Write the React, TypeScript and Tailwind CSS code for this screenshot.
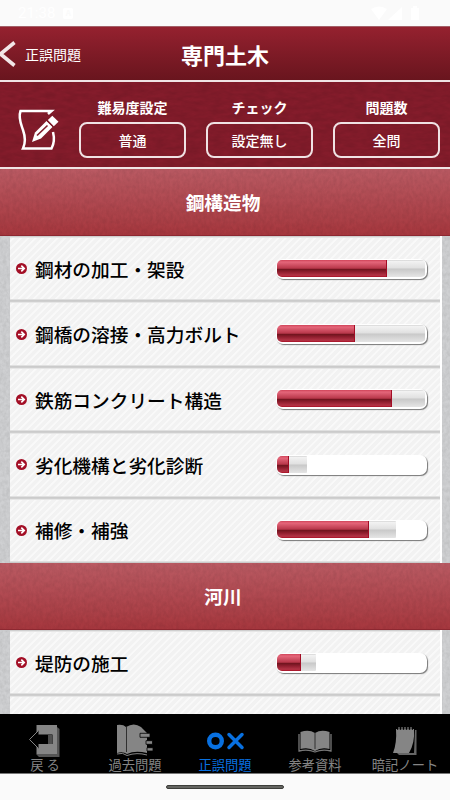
import type { ReactNode } from 'react'
import clsx from 'clsx'

interface Topic {
    title: string
    correct: number
    answered: number
}

interface Section {
    title: string
    topics: Topic[]
}

// correct / answered are percentages of the whole bar
const sections: Section[] = [
    {
        title: '鋼構造物',
        topics: [
            { title: '鋼材の加工・架設', correct: 73.8, answered: 99.4 },
            { title: '鋼橋の溶接・高力ボルト', correct: 52.4, answered: 99.4 },
            { title: '鉄筋コンクリート構造', correct: 77.2, answered: 99.4 },
            { title: '劣化機構と劣化診断', correct: 8, answered: 20 },
            { title: '補修・補強', correct: 62, answered: 79.8 },
        ],
    },
    {
        title: '河川',
        topics: [
            { title: '堤防の施工', correct: 16, answered: 26 },
            { title: '', correct: 0, answered: 0 },
        ],
    },
]

const filters = [
    { label: '難易度設定', value: '普通' },
    { label: 'チェック', value: '設定無し' },
    { label: '問題数', value: '全問' },
]

function Texture({ id, frequency, opacity }: { id: string; frequency: string; opacity: string }) {
    return (
        <svg className={clsx('absolute inset-0 h-full w-full', opacity)} aria-hidden="true">
            <filter id={id} x="0" y="0" width="100%" height="100%">
                <feTurbulence type="fractalNoise" baseFrequency={frequency} numOctaves="3" seed="4" />
                <feColorMatrix values="0 0 0 0 0  0 0 0 0 0  0 0 0 0 0  2 0 0 0 -0.6" />
            </filter>
            <rect width="100%" height="100%" filter={`url(#${id})`} />
        </svg>
    )
}

function StatusBar() {
    return (
        <div className="flex h-[26px] shrink-0 items-center bg-[#fafafa] pl-[18px] pr-[31px] text-white">
            <span className="font-['Roboto'] text-[15px] leading-none">21:38</span>
            <span className="ml-2 flex h-[11px] w-[10px] items-center justify-center rounded-[2px] bg-white text-[8px] font-bold text-[#fafafa]">
                A
            </span>
            <svg className="ml-auto h-[15px] w-[48px]" viewBox="0 0 48 15" fill="currentColor">
                <path d="M0 3Q8-2 16 3L8 14Z" />
                <path d="M17 14L31 1V14Z" />
                <path d="M40 2h2V0h4v2h2v12h-8Z" />
            </svg>
        </div>
    )
}

function Header() {
    return (
        <header className="relative flex h-[54px] shrink-0 items-center justify-center border-t border-[#a26068] bg-gradient-to-b from-[#95212f] to-[#69151e] text-white">
            <button className="absolute left-0 top-0 flex h-full items-center">
                <svg className="h-[26px] w-4" viewBox="0 0 16 26" fill="none" stroke="#f2e6e7" strokeWidth="3.6">
                    <path d="M14.5 1.5L0.5 13L14.5 24.5" />
                </svg>
                <span className="ml-[9px] text-[14px] leading-none">正誤問題</span>
            </button>
            <h1 className="text-[22px] font-bold leading-none">専門土木</h1>
        </header>
    )
}

function EditIcon() {
    return (
        <svg className="h-[42px] w-[42px]" viewBox="0 0 42 42" fill="none" stroke="white" strokeWidth="2.5">
            <path d="M31 6L34.5 3H3.5C1 10 4 16 6 22C8.500 29 8.500 35 6 40.500H34.5C37.500 35 37.500 30 36 24" />
            <path d="M15 34L18 24.500L29.500 13L35.500 19L24 30.500Z" fill="white" stroke="none" />
            <path d="M20 27.500L30.500 17.500" stroke="#7f1b29" strokeWidth="1.6" />
            <path d="M30.800 12L35.300 7.700L41.500 13.700L36.800 18.200Z" fill="white" stroke="none" />
            <path d="M29.500 12.500L36 19" stroke="#7f1b29" strokeWidth="1" />
        </svg>
    )
}

function FilterBar() {
    return (
        <div className="relative flex h-[89px] shrink-0 border-y-2 border-[#f0e4e5] bg-[#841c2b] text-white">
            <Texture id="leather" frequency="0.09 0.25" opacity="opacity-[0.08]" />
            <div className="relative ml-[17px] mt-[26px] h-[42px] w-[42px]">
                <EditIcon />
            </div>
            <div className="relative ml-5 flex gap-5 pt-[18px]">
                {filters.map((filter) => (
                    <div key={filter.label} className="flex w-[107px] flex-col items-center">
                        <span className="text-[14px] font-bold leading-[14px]">{filter.label}</span>
                        <button className="mt-2 flex h-9 w-full items-center justify-center rounded-lg border-2 border-[#f0e2e4] text-[14px] font-medium leading-none">
                            {filter.value}
                        </button>
                    </div>
                ))}
            </div>
        </div>
    )
}

function SectionHeader({ title, id }: { title: string; id: string }) {
    return (
        <div className="relative flex h-[67px] shrink-0 items-center justify-center border-b border-[#8d2831] bg-gradient-to-b from-[#ba5a63] to-[#a6373e] pr-[4px] pt-px text-white">
            <Texture id={id} frequency="0.3 0.2" opacity="opacity-[0.06]" />
            <h2 className="relative text-[18.7px] font-bold leading-none">{title}</h2>
        </div>
    )
}

function ProgressBar({ correct, answered }: { correct: number; answered: number }) {
    return (
        <div className="relative h-5 w-[151px] rounded-[7px] bg-white p-px pb-0.5 shadow-[1px_1px_1px_#777]">
            <div className="relative h-full w-full overflow-hidden rounded-[5px]">
                <div
                    className="absolute inset-y-0 left-0 rounded-r-[1px] bg-[linear-gradient(to_bottom,#d2d2d2_0%,#f2f2f2_8%,#e0e0e0_48%,#c8c8c8_52%,#e5e5e5_100%)]"
                    style={{ width: `${answered}%` }}
                />
                <div
                    className="absolute inset-y-0 left-0 border-r border-[#a20d25] bg-[linear-gradient(to_bottom,#cf4358_0%,#e5667a_12%,#b9384b_48%,#72151f_56%,#8f1e2e_70%,#b33446_90%,#a90f25_100%)]"
                    style={{ width: `${correct}%` }}
                />
            </div>
        </div>
    )
}

function TopicRow({ topic }: { topic: Topic }) {
    return (
        <div
            className={clsx(
                'flex h-[65.4px] shrink-0 items-center border-r-2 border-white pl-[6px] pr-[13px]',
                'bg-[repeating-linear-gradient(135deg,#f2f2f2_0px,#f2f2f2_2.8px,#f9f9f9_3.4px,#f9f9f9_4.6px,#f2f2f2_5.2px)]',
                'shadow-[inset_0_1px_0_#cfcfcf,inset_0_2px_0_#e6e6e6,inset_0_-1px_0_#cbcbcb,inset_0_-2px_0_#e0e0e0]',
            )}
        >
            {topic.title && (
                <>
                    <svg className="h-[11px] w-[11px] shrink-0" viewBox="0 0 11 11">
                        <circle cx="5.5" cy="5.5" r="5.5" fill="#a30f26" />
                        <path d="M2 5.5H8M5.3 2.6L8.2 5.5L5.3 8.4" fill="none" stroke="white" strokeWidth="1.7" />
                    </svg>
                    <span className="ml-2 flex-1 whitespace-nowrap pt-px text-[18.7px] font-medium leading-none text-black">
                        {topic.title}
                    </span>
                    <ProgressBar correct={topic.correct} answered={topic.answered} />
                </>
            )}
        </div>
    )
}

function TopicList() {
    return (
        <main className="relative flex h-[545px] shrink-0 flex-col overflow-hidden bg-[#cfd0d2]">
            <Texture id="paper" frequency="0.3 0.25" opacity="opacity-[0.06]" />
            {sections.map((section, i) => (
                <section key={section.title} className="relative shrink-0">
                    <SectionHeader title={section.title} id={`band-${i}`} />
                    <div className="ml-[10px] mr-[8px] flex flex-col">
                        {section.topics.map((topic, j) => (
                            <TopicRow key={j} topic={topic} />
                        ))}
                    </div>
                </section>
            ))}
        </main>
    )
}

interface TabProps {
    label: string
    active?: boolean
    children: ReactNode
}

function Tab({ label, active, children }: TabProps) {
    return (
        <button className={clsx('flex flex-1 flex-col items-center', active ? 'text-[#0870e0]' : 'text-[#858585]')}>
            <svg className="mt-[9px] h-[35px] w-[40px]" viewBox="0 0 40 35">
                {children}
            </svg>
            <span className="whitespace-pre text-[13.3px] leading-[14px]">{label}</span>
        </button>
    )
}

function TabBar() {
    return (
        <nav className="flex h-[59px] shrink-0 bg-black">
            <Tab label="戻 る">
                <path d="M32 4L34.5 6V34H14L11 31H32Z" fill="#555" />
                <path d="M11.5 2H32V31H11.5Z" fill="currentColor" />
                <path d="M4.5 16.500L13.500 7.500V11.500H27.500V21H13.500V25.500Z" fill="black" />
                <path d="M13 8L4.500 16.500L13 25" fill="none" stroke="currentColor" />
                <path d="M24 12V21" stroke="#666" strokeWidth="1.5" />
                <path d="M26 12V21" stroke="currentColor" strokeWidth="1.2" />
            </Tab>
            <Tab label="過去問題">
                <path d="M2 2Q8 1 11 4Q19-1 26 4L32 10V30Q20 27 12 31Q8 28 2 30Z" fill="currentColor" />
                <path d="M11.5 4V29" stroke="#303030" />
                <path d="M2 31Q8 29 12 32.5Q22 29 32 32" fill="none" stroke="currentColor" />
                <path d="M25 10.300H35V14.300H25ZM31 17.700H37.500V21.300H31ZM32 24.700H38V28H32Z" fill="currentColor" stroke="black" strokeWidth="0.8" />
            </Tab>
            <Tab label="正誤問題" active>
                <circle cx="10.5" cy="18" r="6.3" fill="none" stroke="currentColor" strokeWidth="4.4" />
                <path d="M24 11.500L37 24.500M37 11.500L24 24.500" stroke="currentColor" strokeWidth="3.5" strokeLinecap="round" />
            </Tab>
            <Tab label="参考資料">
                <path d="M4 11V28Q13 26 20 29Q27 26 36 28V11" fill="none" stroke="#777" strokeWidth="1.3" />
                <path d="M5.5 9Q14 6 20 10Q26 6 34.5 9V26Q26 24 20 28Q14 24 5.5 26Z" fill="currentColor" />
                <path d="M20 10V26" stroke="#303030" />
            </Tab>
            <Tab label="暗記ノート">
                <path d="M30 7H31.5V32H14L12 30H29Z" fill="#666" />
                <path d="M11 6H29Q30 20 24 30H8Q12 20 11 6Z" fill="currentColor" />
                <path d="M28 23V30H25Z" fill="black" />
                <path d="M14 7V4M17 7V4M20 7V4M23 7V4M26 7V4" stroke="#666" strokeWidth="1.5" />
                <path d="M12.5 4.5V7M15.5 4.5V7M18.5 4.5V7M21.5 4.5V7M24.5 4.5V7M27.5 4.5V7" stroke="black" strokeWidth="0.8" />
            </Tab>
        </nav>
    )
}

export default function App() {
    return (
        <div className="flex h-[800px] w-[450px] flex-col overflow-hidden bg-[#fafafa] font-['Noto_Sans_CJK_JP',sans-serif]">
            <StatusBar />
            <Header />
            <FilterBar />
            <TopicList />
            <TabBar />
            <div className="flex flex-1 items-start justify-center border-t border-[#777] pt-[11px]">
                <div className="h-1 w-[118px] rounded-full border border-[#3d3e3a] bg-[#646561]" />
            </div>
        </div>
    )
}
